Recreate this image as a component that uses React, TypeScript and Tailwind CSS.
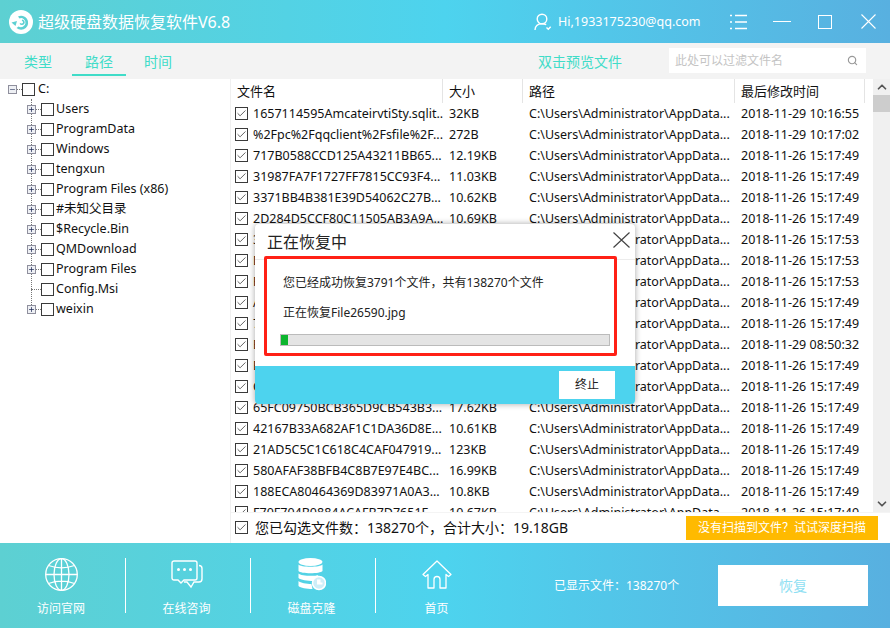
import React from 'react';
import { Check, Search, Minus, Plus, ChevronUp, ChevronDown } from 'lucide-react';

const font = "font-['Noto_Sans','Noto_Sans_CJK_SC',sans-serif]";

const treeItems = [
  'Users', 'ProgramData', 'Windows', 'tengxun', 'Program Files (x86)', '#未知父目录',
  '$Recycle.Bin', 'QMDownload', 'Program Files', 'Config.Msi', 'weixin',
];

const P = 'C:\\Users\\Administrator\\AppData...';

const rows = [
  ['1657114595AmcateirvtiSty.sqlit...', '32KB', '2018-11-29 10:16:55'],
  ['%2Fpc%2Fqqclient%2Fsfile%2F...', '272B', '2018-11-29 10:17:02'],
  ['717B0588CCD125A43211BB65...', '12.19KB', '2018-11-26 15:17:49'],
  ['31987FA7F1727FF7815CC93F4...', '11.03KB', '2018-11-26 15:17:49'],
  ['3371BB4B381E39D54062C27B...', '10.62KB', '2018-11-26 15:17:49'],
  ['2D284D5CCF80C11505AB3A9A...', '10.69KB', '2018-11-26 15:17:49'],
  ['3A0F5B21C7D84E19A6C2F07E...', '11.2KB', '2018-11-26 15:17:53'],
  ['D41C09E7B3A2F86015CE47A1...', '10.4KB', '2018-11-26 15:17:53'],
  ['F8E2A6017C3D49B5E10A76CD...', '12.1KB', '2018-11-26 15:17:53'],
  ['A94D17C3E05B286FD3C1B704...', '10.9KB', '2018-11-26 15:17:49'],
  ['7C05E1B9A2846DF3017AC95E...', '11.5KB', '2018-11-26 15:17:49'],
  ['B26F30D8E4C1975A06D2E381...', '16KB', '2018-11-29 08:50:32'],
  ['E17A94C05D3B286FA1C7D046...', '10.3KB', '2018-11-26 15:17:49'],
  ['C5039BE1D7A6428F01BD63E9...', '12.6KB', '2018-11-26 15:17:49'],
  ['65FC09750BCB365D9CB543B3...', '17.62KB', '2018-11-26 15:17:49'],
  ['42167B33A682AF1C1DA36D8E...', '10.61KB', '2018-11-26 15:17:49'],
  ['21AD5C5C1C618C4CAF047919...', '123KB', '2018-11-26 15:17:49'],
  ['580AFAF38BFB4C8B7E97E4BC...', '16.99KB', '2018-11-26 15:17:49'],
  ['188ECA80464369D83971A0A3...', '10.8KB', '2018-11-26 15:17:49'],
  ['F70F704B0884ACAFB7D7651F...', '10.67KB', '2018-11-26 15:17:49'],
];

const Box: React.FC<{ checked?: boolean }> = ({ checked }) => (
  <span className="flex h-[13px] w-[13px] shrink-0 items-center justify-center border border-[#3a3a3a] bg-white">
    {checked && <Check className="h-[11px] w-[11px] text-[#555]" strokeWidth={2} />}
  </span>
);

const Expander: React.FC<{ open?: boolean }> = ({ open }) => (
  <span className="flex h-[9px] w-[9px] shrink-0 items-center justify-center border border-[#8f8f9d] bg-[#eef0f4] text-[#1e2a55]">
    {open ? <Minus className="h-[7px] w-[7px]" strokeWidth={2} /> : <Plus className="h-[7px] w-[7px]" strokeWidth={2.5} />}
  </span>
);

const Divider = () => <div className="h-[55px] w-px shrink-0 bg-white" />;

const NavItem: React.FC<{ label: string; width: string; icon: React.ReactNode }> = ({ label, width, icon }) => (
  <div className={`flex shrink-0 flex-col items-center pt-[4px] pr-[3px] text-[12px] text-white ${width}`}>
    <div className="flex h-[36px] items-center justify-center">{icon}</div>
    <span className="mt-[6px] leading-[20px]">{label}</span>
  </div>
);

const App: React.FC = () => {
  return (
    <div className={`relative flex h-[628px] w-[890px] flex-col overflow-hidden bg-white ${font}`}>
      {/* title bar */}
      <div className="flex h-[43px] shrink-0 items-center bg-gradient-to-r from-[#5dd0d2] via-[#4dd3ee] to-[#58b0e0] pl-[9px] text-white">
        <svg width="24" height="24" viewBox="0 0 24 24" className="shrink-0">
          <circle cx="12" cy="12" r="12" fill="#fff" />
          <path d="M9 6.500a7 7 0 1 1-1.500 11.500l2-1.600a4.500 4.500 0 1 0 1-8z" fill="#5dd0d2" />
          <path d="M2.500 12.500l5.500-1.500-1.500 5z" fill="#5dd0d2" />
          <path d="M13 9.500a2.800 2.800 0 1 1-2.500 4.200l1.400-.8a1.200 1.200 0 1 0 1-1.900z" fill="#5dd0d2" />
        </svg>
        <span className="ml-[5px] w-[496px] text-[16px]">超级硬盘数据恢复软件V6.8</span>
        <svg width="18" height="18" viewBox="0 0 18 18" fill="none" stroke="#fff" strokeWidth="1.4" className="shrink-0">
          <circle cx="8" cy="6" r="4.800" />
          <path d="M1 17c0-4 3-6.300 7-6.300 1.600 0 3 .4 4.200 1" />
          <path d="M12.500 14.500l1.800 1.800 2.400-2.600" />
        </svg>
        <span className="ml-[6px] w-[172px] pt-[2px] text-[12.5px]">Hi,1933175230@qq.com</span>
        <svg width="17" height="16" viewBox="0 0 17 16" stroke="#fff" strokeWidth="1.500" className="shrink-0">
          <path d="M0 1.500h2M5 1.500h12M0 8h2M5 8h12M0 14.500h2M5 14.500h12" />
        </svg>
        <div className="ml-[26px] h-[1.500px] w-[18px] shrink-0 bg-white" />
        <div className="ml-[27px] h-[14px] w-[14px] shrink-0 border border-white" />
        <svg width="15" height="15" viewBox="0 0 15 15" stroke="#fff" strokeWidth="1.100" className="ml-[29px] shrink-0">
          <path d="M.5.500l14 14M14.500.500l-14 14" />
        </svg>
      </div>

      {/* tabs */}
      <div className="flex h-[36px] shrink-0 items-start bg-[#f3f3f3] text-[14px] text-[#40dcc8]">
        <div className="ml-[24px] flex h-[36px] w-[28px] shrink-0 items-center justify-center">类型</div>
        <div className="ml-[20px] flex h-[33px] w-[54px] shrink-0 items-center justify-center border-b-[2px] border-[#40dcc8] pt-[5px]">路径</div>
        <div className="ml-[18px] flex h-[36px] w-[28px] shrink-0 items-center justify-center">时间</div>
        <div className="ml-[366px] flex h-[36px] w-[84px] shrink-0 items-center justify-center">双击预览文件</div>
        <div className="mt-[5px] ml-[47px] flex h-[25px] w-[197px] shrink-0 items-center justify-between bg-white pr-[8px] pl-[6px] text-[12px] text-[#c4c4c4]">
          <span>此处可以过滤文件名</span>
          <Search className="h-[11px] w-[11px] text-[#999]" strokeWidth={2.5} />
        </div>
      </div>

      {/* main */}
      <div className="flex min-h-0 flex-1">
        {/* tree */}
        <div className="w-[231px] shrink-0 border-r border-[#f0f0f0] pt-[1px] pl-[8px] text-[12.5px] text-[#111]">
          <div className="flex h-[18px] items-center">
            <Expander open />
            <span className="w-[5px] border-t border-dotted border-[#777]" />
            <Box />
            <span className="ml-[3px]">C:</span>
          </div>
          <div className="relative mt-[1px] ml-[19px]">
            <span className="absolute top-0 bottom-[10px] left-[4px] border-l border-dotted border-[#777]" />
            {treeItems.map((item) => (
              <div key={item} className="relative flex h-[20px] items-center">
                {item === 'Config.Msi' ? (
                  <span className="ml-[4px] w-[10px] border-t border-dotted border-[#777]" />
                ) : (
                  <>
                    <Expander />
                    <span className="w-[5px] border-t border-dotted border-[#777]" />
                  </>
                )}
                <Box />
                <span className="ml-[2px]">{item}</span>
              </div>
            ))}
          </div>
        </div>

        {/* table */}
        <div className="flex min-w-0 flex-1 flex-col">
          <div className="flex min-h-0 flex-1 overflow-hidden">
            <div className="min-w-0 flex-1 overflow-hidden text-[12.5px] text-[#111]">
              <div className="flex h-[24px] items-center text-[13px]">
                <div className="flex h-full w-[212px] items-center border-r border-[#e4e4e4] pt-[2px] pl-[6px]">文件名</div>
                <div className="flex h-full w-[80px] items-center border-r border-[#e4e4e4] pt-[2px] pl-[6px]">大小</div>
                <div className="flex h-full w-[212px] items-center border-r border-[#e4e4e4] pt-[2px] pl-[6px]">路径</div>
                <div className="flex h-full w-[130px] items-center border-r border-[#e4e4e4] pt-[2px] pl-[6px]">最后修改时间</div>
              </div>
              {rows.map((row) => (
                <div key={row[0]} className="flex h-[21px] items-center whitespace-nowrap">
                  <div className="flex w-[212px] items-center overflow-hidden pl-[4px]">
                    <Box checked />
                    <span className="ml-[5px] pt-[2px]">{row[0]}</span>
                  </div>
                  <div className="w-[80px] pt-[2px] pl-[6px]">{row[1]}</div>
                  <div className="w-[212px] pt-[2px] pl-[6px]">{P}</div>
                  <div className="w-[138px] pt-[2px] pl-[6px]">{row[2]}</div>
                </div>
              ))}
            </div>
            <div className="flex w-[17px] shrink-0 flex-col items-center justify-between bg-[#f0f0f0] text-[#555]">
              <div className="flex w-full flex-col items-center">
                <ChevronUp className="mt-[1px] h-[14px] w-[14px]" strokeWidth={3} />
                <div className="mt-[1px] h-[17px] w-full bg-[#cdcdcd]" />
              </div>
              <ChevronDown className="mb-[1px] h-[14px] w-[14px]" strokeWidth={3} />
            </div>
          </div>
          <div className="flex h-[31px] shrink-0 items-center border-t border-[#f4f4f4] pl-[4px] text-[14px] text-[#111]">
            <div className="mb-[2px] flex items-center">
              <Box checked />
              <span className="ml-[7px]">您已勾选文件数：138270个，合计大小：19.18GB</span>
            </div>
            <div className="mr-[12px] ml-auto flex h-[24px] w-[192px] items-center justify-center bg-[#ffba00] text-[12px] text-white">
              没有扫描到文件？试试深度扫描
            </div>
          </div>
        </div>
      </div>

      {/* bottom bar */}
      <div className="flex h-[85px] shrink-0 items-center bg-gradient-to-r from-[#5dd0d2] via-[#4dd3ee] to-[#58b0e0]">
        <NavItem
          label="访问官网"
          width="w-[125px]"
          icon={
            <svg width="33" height="33" viewBox="0 0 33 33" fill="none" stroke="#fff" strokeWidth="1.300">
              <circle cx="16.500" cy="16.500" r="15.800" />
              <ellipse cx="16.500" cy="16.500" rx="7.500" ry="15.800" />
              <path d="M16.500.7v31.600M.7 16.500h31.600M3.500 7.500c8 3 18 3 26 0M3.500 25.500c8-3 18-3 26 0" />
            </svg>
          }
        />
        <Divider />
        <NavItem
          label="在线咨询"
          width="w-[124px]"
          icon={
            <svg width="32" height="29" viewBox="0 0 32 29" fill="none" stroke="#fff" strokeWidth="1.400">
              <path d="M3 1h21a2 2 0 0 1 2 2v15a2 2 0 0 1-2 2H13l-3 3-3-3H3a2 2 0 0 1-2-2V3a2 2 0 0 1 2-2z" />
              <path d="M28 5.500c2 0 3 1 3 3V19c0 2-1 3-3 3h-5l-3 5-4-5h-3" />
              <circle cx="7.500" cy="9.500" r="1.500" fill="#fff" stroke="none" />
              <circle cx="13.500" cy="9.500" r="1.500" fill="#fff" stroke="none" />
              <circle cx="19.500" cy="9.500" r="1.500" fill="#fff" stroke="none" />
            </svg>
          }
        />
        <Divider />
        <NavItem
          label="磁盘克隆"
          width="w-[124px]"
          icon={
            <svg width="28" height="33" viewBox="0 0 28 33" fill="#fff">
              <ellipse cx="12.500" cy="4" rx="12" ry="4" />
              <path d="M.5 6.500c2 3 22 3 24 0v6.500c-2 3-22 3-24 0z" />
              <path d="M.5 15.500c2 2.500 16 3 20 1.500l-5 6c-6 0-13-1-15-3z" />
              <path d="M.5 23c2 2 8 3 13 3l1 5c-6 0-12-1-14-3z" />
              <circle cx="21" cy="25" r="6.500" fill="#cdeef8" stroke="#fff" strokeWidth="1.500" />
              <path d="M19 21.500h3.500v3h2v2H19z" fill="#fff" />
            </svg>
          }
        />
        <Divider />
        <NavItem
          label="首页"
          width="w-[124px]"
          icon={
            <svg width="30" height="29" viewBox="0 0 30 29" fill="none" stroke="#fff" strokeWidth="1.300" strokeLinejoin="round">
              <path d="M15 1L1 14.500l2.500 2 2.500-2V28h6v-8.500a3 3 0 0 1 6 0V28h6V14.500l2.500 2 2.500-2z" />
            </svg>
          }
        />
        <span className="ml-[54px] w-[164px] shrink-0 pt-[1px] text-[12px] text-white">已显示文件：138270个</span>
        <div className="flex h-[41px] w-[150px] shrink-0 items-center justify-center bg-white text-[14px] text-[#8fdff3]">恢复</div>
      </div>

      {/* recovering dialog */}
      <div className="absolute top-[224px] left-[255px] flex h-[180px] w-[380px] flex-col overflow-hidden rounded-[4px] bg-white shadow-[0_0_6px_rgba(0,0,0,0.35)]">
        <span className="absolute top-[35px] right-0 left-0 border-t border-[#ececec]" />
        <div className="flex h-[32px] shrink-0 items-center justify-between pt-[3px] pr-[5px] pl-[12px] text-[16px] text-[#222]">
          <span>正在恢复中</span>
          <svg width="17" height="16" viewBox="0 0 17 16" stroke="#444" strokeWidth="1.200" className="mb-[3px]">
            <path d="M.5.500l16 15M16.500.500l-16 15" />
          </svg>
        </div>
        <div className="relative ml-[9px] h-[100px] w-[353px] shrink-0 rounded-[2px] border-[3px] border-[#ff2016] bg-white pt-[15px] pl-[16px] text-[12px] text-[#222]">
          <div className="leading-[18px]">您已经成功恢复3791个文件，共有138270个文件</div>
          <div className="mt-[12px] leading-[18px]">正在恢复File26590.jpg</div>
          <div className="mt-[12px] ml-[-3px] h-[12px] w-[330px] border border-[#bbb] bg-[#e4e4e4]">
            <div className="h-full w-[7px] bg-[#0cb52e]" />
          </div>
        </div>
        <div className="mt-[10px] flex flex-1 items-center justify-end bg-[#4dd3ee] pr-[20px]">
          <div className="flex h-[28px] w-[56px] items-center justify-center bg-white text-[12px] text-[#222]">终止</div>
        </div>
      </div>
    </div>
  );
};

export default App;
